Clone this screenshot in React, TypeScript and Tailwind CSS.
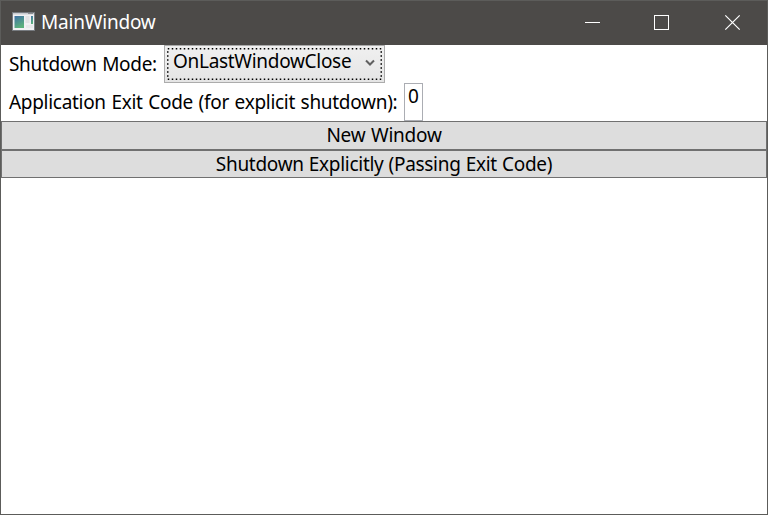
import React from "react";

function AppIcon() {
  return (
    <svg className="-mt-[3px] ml-[11px] block" width="23" height="19" viewBox="0 0 23 19">
      <defs>
        <linearGradient id="pane" x1="0" y1="0" x2="0.4" y2="1">
          <stop offset="0" stopColor="#3f70a6" />
          <stop offset="1" stopColor="#5bb07c" />
        </linearGradient>
      </defs>
      <rect width="23" height="19" fill="#777b80" />
      <rect x="1" y="1" width="21" height="17" fill="#f1f1f3" />
      <rect x="1" y="1" width="21" height="1.5" fill="#c9cbd0" />
      <rect x="16" y="1" width="5" height="1" fill="#8b8d92" />
      <rect x="2.5" y="4" width="9.5" height="12" fill="url(#pane)" />
      <rect x="13.5" y="4" width="4" height="7" fill="#e2e2e4" />
      <rect x="19" y="4" width="2" height="8" fill="url(#pane)" />
      <rect x="14" y="13" width="7" height="3" fill="#e8e8ea" />
    </svg>
  );
}

export default function App() {
  return (
    <div className="flex h-[515px] w-[768px] flex-col border border-[#5c5c5a] bg-white font-['Noto_Sans','Open_Sans',sans-serif] text-[19px] leading-[26px] whitespace-nowrap text-black">
      <header className="flex h-11 shrink-0 items-center bg-[#4c4a48] text-white">
        <AppIcon />
        <span className="-mt-[2px] ml-[6px] flex-1 tracking-[-0.2px]">MainWindow</span>
        <svg className="block" width="184" height="44" viewBox="583 1 184 44" fill="none" stroke="#fff">
          <path d="M585 22.5h15M654.5 15.5h14v14h-14z" shapeRendering="crispEdges" />
          <path d="M725.3 15.3l14.4 14.4M739.7 15.3l-14.4 14.4" strokeWidth="1.2" />
        </svg>
      </header>
      <div className="flex h-[38px] shrink-0 items-center">
        <span className="ml-2 w-[155px] tracking-[-0.33px] [word-spacing:1px]">Shutdown Mode:</span>
        <div className="flex h-[38px] w-[221px] border border-[#acacac] bg-linear-to-b from-[#f0f0f0] to-[#e5e5e5] p-[2px]">
          <div className="relative flex flex-1 items-center">
            <svg className="absolute inset-0" width="215" height="32" viewBox="0 0 215 32" fill="none" stroke="#000">
              <rect x="0.75" y="0.75" width="213.5" height="30.5" strokeWidth="1.5" strokeDasharray="1.5 2.5" />
            </svg>
            <span className="-mt-[6px] ml-[6px] w-[192px] tracking-[-0.3px]">OnLastWindowClose</span>
            <svg className="-mt-[2px] block shrink-0" width="10" height="8" viewBox="0 0 10 8" fill="none" stroke="#606060" strokeWidth="2">
              <path d="M1 1.5l4 4 4-4" />
            </svg>
          </div>
        </div>
      </div>
      <div className="flex h-[38px] shrink-0 items-center">
        <span className="ml-2 w-[395px] tracking-[-0.3px] [word-spacing:1px]">Application Exit Code (for explicit shutdown):</span>
        <div className="h-[38px] w-[19px] border border-[#abadb3] pl-[3px] leading-[24px]">0</div>
      </div>
      <button className="h-[29px] shrink-0 border border-[#707070] bg-[#ddd] pb-[2px] tracking-[-0.25px] [word-spacing:1px]">New Window</button>
      <button className="h-[28px] shrink-0 border border-[#707070] bg-[#ddd] tracking-[-0.3px] [word-spacing:0.5px]">Shutdown Explicitly (Passing Exit Code)</button>
    </div>
  );
}
